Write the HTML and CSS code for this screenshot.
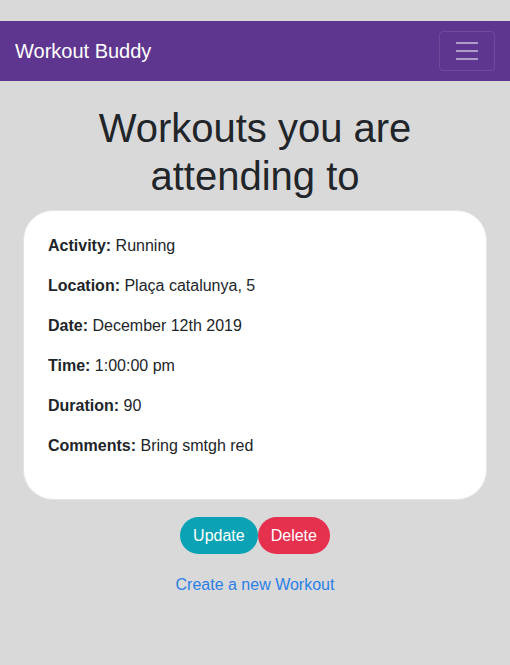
FILE: index.html
```html
<!DOCTYPE html>
<html>
<head>
<meta charset="utf-8">
<link rel="stylesheet" href="styles.css">
</head>
<body>
<nav class="navbar">
  <span class="brand">Workout Buddy</span>
  <button class="toggler" aria-label="menu">
    <svg width="30" height="30" viewBox="0 0 30 30"><path stroke="rgba(255,255,255,0.5)" stroke-width="2" stroke-linecap="butt" d="M4 7h22M4 15h22M4 23h22"/></svg>
  </button>
</nav>
<main class="main">
  <h1 class="title">Workouts you are attending to</h1>
  <div class="card">
    <p class="row"><b>Activity:</b> Running</p>
    <p class="row"><b>Location:</b> Plaça catalunya, 5</p>
    <p class="row"><b>Date:</b> December 12th 2019</p>
    <p class="row"><b>Time:</b> 1:00:00 pm</p>
    <p class="row"><b>Duration:</b> 90</p>
    <p class="row"><b>Comments:</b> Bring smtgh red</p>
  </div>
  <div class="actions">
    <button class="btn btn-update">Update</button><button class="btn btn-delete">Delete</button>
  </div>
  <a class="create" href="#">Create a new Workout</a>
</main>
</body>
</html>
```
FILE: styles.css
```css
* { box-sizing: border-box; }
html, body { margin: 0; padding: 0; }
body {
  background: #d9d9d9;
  font-family: "Liberation Sans", Arial, sans-serif;
  font-size: 16px;
  line-height: 1.5;
  color: #212529;
  padding-top: 21px;
}
.navbar {
  background: #5f368f;
  height: 60px;
  display: flex;
  align-items: center;
  justify-content: space-between;
  padding: 0 15px 0 15px;
}
.brand {
  color: #fff;
  font-size: 20px;
  line-height: 30px;
}
.toggler {
  width: 56px;
  height: 40px;
  background: transparent;
  border: 1px solid rgba(255,255,255,0.1);
  border-radius: 4px;
  display: flex;
  align-items: center;
  justify-content: center;
  padding: 0;
}
.toggler svg { display: block; }
.main {
  display: flex;
  flex-direction: column;
  align-items: center;
  padding: 0 23px;
}
.title {
  font-size: 40px;
  font-weight: 400;
  line-height: 48px;
  text-align: center;
  margin: 23px 0 10px;
  color: #212529;
}
.card {
  width: 100%;
  background: #fff;
  border: 1px solid #e4e4e4;
  border-radius: 30px;
  padding: 23px 24px 25px;
}
.row { margin: 0 0 16px; }
.row b { font-weight: 700; }
.actions {
  display: flex;
  margin-top: 17px;
}
.btn {
  font-family: inherit;
  font-size: 16px;
  line-height: 24px;
  color: #fff;
  border: 1px solid transparent;
  border-radius: 20px;
  padding: 6px 12px;
  height: 37px;
}
.btn-update { background: #0aa2b5; }
.btn-delete { background: #e5304e; }
.create {
  margin-top: 19px;
  color: #2b80e6;
  text-decoration: none;
}
```
